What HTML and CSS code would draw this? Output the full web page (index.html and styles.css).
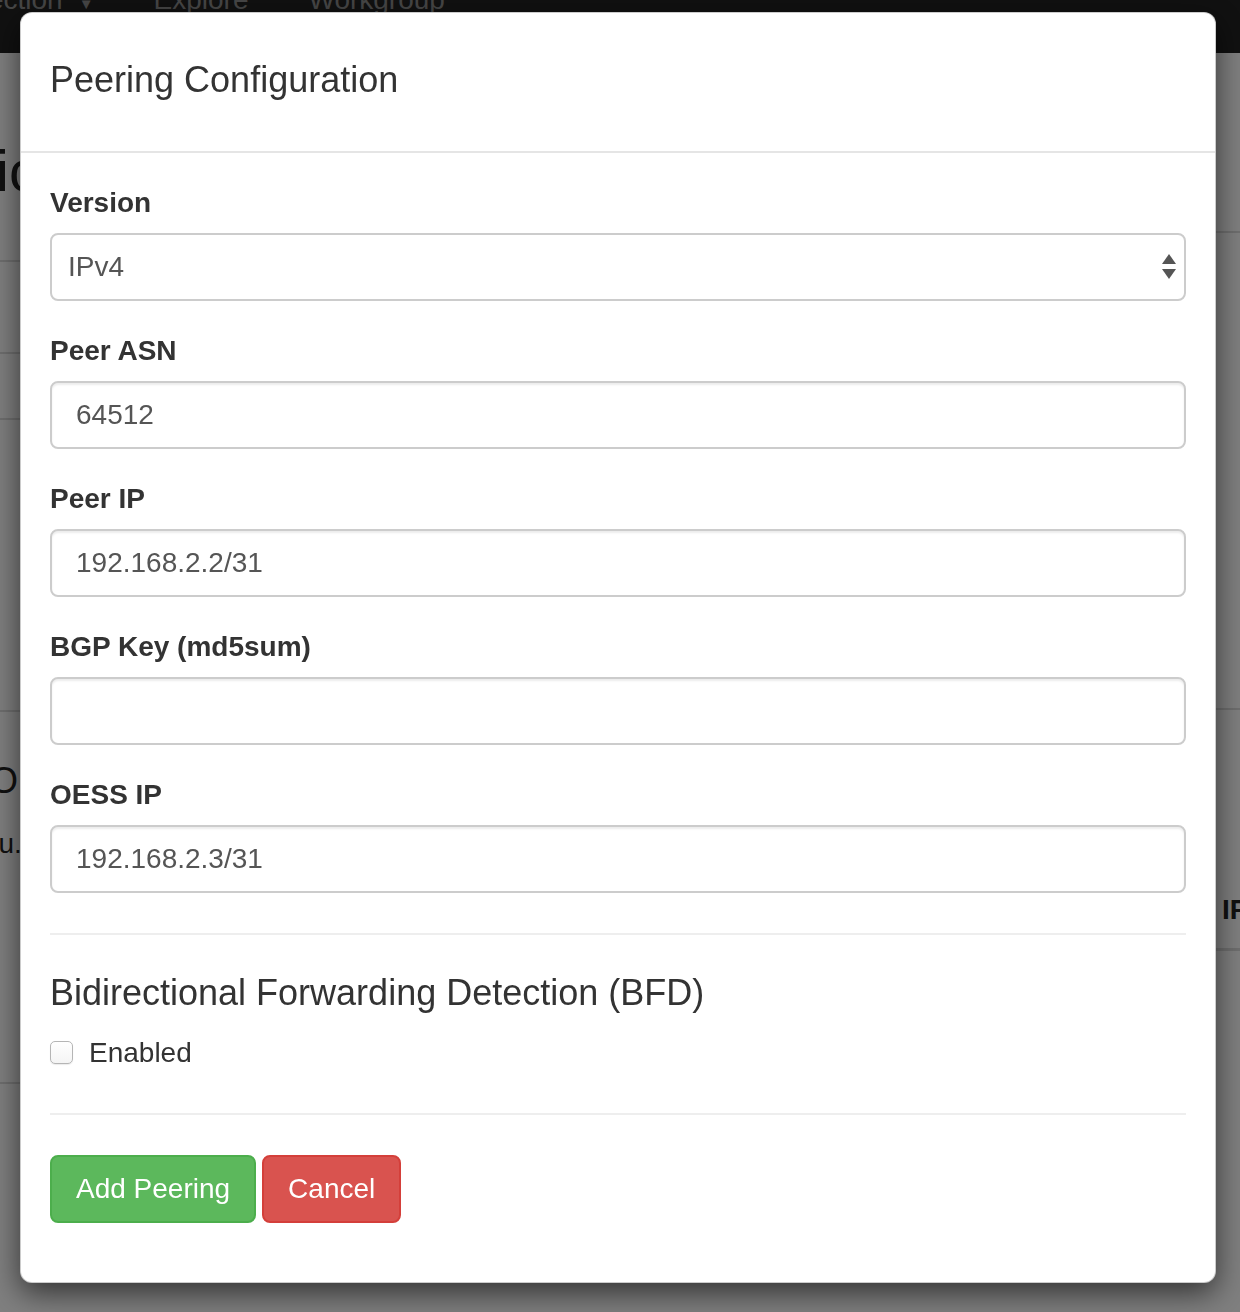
FILE: index.html
```html
<!DOCTYPE html>
<html lang="en">
<head>
<meta charset="utf-8">
<title>Peering Configuration</title>
<link rel="stylesheet" href="styles.css">
</head>
<body>
<div class="page">
  <nav class="navbar">
    <span class="nav-item nav-first">Connection</span><span class="caret">&#9660;</span>
    <span class="nav-item nav-explore">Explore</span>
    <span class="nav-item nav-workgroup">Workgroup</span>
  </nav>
  <div class="bg-grid">
    <div class="bg-left">
      <div class="bg-title"><span class="bg-h1">Public</span></div>
      <div class="bg-row bg-row1"></div>
      <div class="bg-row bg-row2"></div>
      <div class="bg-row bg-row3"></div>
      <div class="bg-block">
        <div class="bg-h3">O I</div>
        <div class="bg-p">menu.</div>
      </div>
    </div>
    <div class="bg-right">
      <div class="bg-rrow1"></div>
      <div class="bg-rrow2"></div>
      <div class="bg-rhead">IP</div>
    </div>
  </div>
</div>
<div class="backdrop"></div>
<div class="modal">
  <div class="modal-dialog">
    <div class="modal-content">
      <div class="modal-header">
        <h4 class="title">Peering Configuration</h4>
      </div>
      <div class="modal-body">
        <form class="form">
          <div class="form-group">
            <label class="control-label">Version</label>
            <div class="select-wrap">
              <select class="form-control select"><option>IPv4</option></select>
              <svg class="select-arrows" width="14" height="26" viewBox="0 0 14 26">
                <polygon points="7,0 14,10 0,10" fill="#555"/>
                <polygon points="0,15 14,15 7,25" fill="#555"/>
              </svg>
            </div>
          </div>
          <div class="form-group">
            <label class="control-label">Peer ASN</label>
            <input class="form-control" type="text" value="64512">
          </div>
          <div class="form-group">
            <label class="control-label">Peer IP</label>
            <input class="form-control" type="text" value="192.168.2.2/31">
          </div>
          <div class="form-group">
            <label class="control-label">BGP Key (md5sum)</label>
            <input class="form-control" type="text" value="">
          </div>
          <div class="form-group">
            <label class="control-label">OESS IP</label>
            <input class="form-control" type="text" value="192.168.2.3/31">
          </div>
          <hr class="divider divider-top">
          <h4 class="section-title">Bidirectional Forwarding Detection (BFD)</h4>
          <div class="checkbox">
            <label class="checkbox-label"><span class="cb"></span>Enabled</label>
          </div>
          <hr class="divider">
          <div class="actions">
            <button type="button" class="btn btn-success">Add Peering</button>
            <button type="button" class="btn btn-danger">Cancel</button>
          </div>
        </form>
      </div>
    </div>
  </div>
</div>
</body>
</html>
```
FILE: styles.css
```css
html, body {
  margin: 0;
  padding: 0;
  height: 1312px;
  overflow: hidden;
}
body {
  font-family: "Liberation Sans", Arial, Helvetica, sans-serif;
  background: #fff;
  color: #333;
}
.page {
  width: 1240px;
}
.navbar {
  height: 53px;
  background: #222;
  display: flex;
  align-items: flex-start;
  overflow: hidden;
}
.nav-item {
  font-size: 28px;
  line-height: 32px;
  color: #8d8d8d;
  margin-top: -16px;
  white-space: nowrap;
}
.nav-first {
  margin-left: -79px;
}
.caret {
  font-size: 15px;
  line-height: 15px;
  color: #8d8d8d;
  margin-left: 16px;
  margin-top: -4px;
}
.nav-explore {
  margin-left: 60px;
}
.nav-workgroup {
  margin-left: 60px;
}
.bg-grid {
  display: grid;
  grid-template-columns: 1216px 24px;
}
.bg-left {
  overflow: hidden;
}
.bg-title {
  height: 118px;
  padding-top: 89px;
  border-bottom: 2px solid #ddd;
}
.bg-h1 {
  display: block;
  font-size: 58px;
  line-height: 58px;
  margin-left: -120px;
  white-space: nowrap;
  color: #222;
}
.bg-row1 {
  height: 90px;
  border-bottom: 2px solid #ddd;
}
.bg-row2 {
  height: 64px;
  border-bottom: 2px solid #ddd;
}
.bg-row3 {
  height: 290px;
  border-bottom: 2px solid #ddd;
}
.bg-block {
  height: 321px;
  padding-top: 49px;
  border-bottom: 2px solid #ddd;
}
.bg-h3 {
  font-size: 36px;
  line-height: 40px;
  margin-left: -10px;
  white-space: nowrap;
  color: #222;
}
.bg-p {
  font-size: 28px;
  line-height: 40px;
  margin-top: 23px;
  margin-left: -56px;
  white-space: nowrap;
  color: #222;
}
.bg-right {
  overflow: hidden;
}
.bg-rrow1 {
  height: 178px;
  border-bottom: 2px solid #ddd;
}
.bg-rrow2 {
  height: 475px;
  border-bottom: 2px solid #ddd;
}
.bg-rhead {
  font-weight: bold;
  font-size: 28px;
  line-height: 40px;
  padding: 180px 0 18px 6px;
  border-bottom: 3px solid #ddd;
  color: #222;
  white-space: nowrap;
}
.backdrop {
  position: fixed;
  inset: 0;
  background: rgba(0, 0, 0, 0.5);
}
.modal {
  position: fixed;
  inset: 0;
}
.modal-dialog {
  width: 1196px;
  margin: 12px 0 0 20px;
}
.modal-content {
  background: #fff;
  border: 1px solid rgba(0, 0, 0, 0.2);
  border-radius: 12px;
  box-shadow: 0 10px 30px rgba(0, 0, 0, 0.6);
  box-sizing: border-box;
}
.modal-header {
  padding: 27px 29px 31px;
  border-bottom: 2px solid #e5e5e5;
}
.title {
  margin: 20px 0;
  font-size: 36px;
  line-height: 40px;
  font-weight: normal;
  color: #333;
}
.modal-body {
  padding: 30px 29px 29px;
}
.form {
  margin: 0;
}
.form-group {
  margin-bottom: 30px;
}
.control-label {
  display: block;
  font-size: 28px;
  line-height: 40px;
  font-weight: bold;
  margin-bottom: 10px;
  color: #333;
}
.form-control {
  display: block;
  width: 100%;
  height: 68px;
  box-sizing: border-box;
  padding: 12px 24px;
  font-family: "Liberation Sans", Arial, Helvetica, sans-serif;
  font-size: 28px;
  line-height: 40px;
  color: #555;
  background: #fff;
  border: 2px solid #ccc;
  border-radius: 8px;
  box-shadow: inset 0 2px 2px rgba(0, 0, 0, 0.075);
  outline: none;
  margin: 0;
}
.select-wrap {
  position: relative;
}
.select {
  -webkit-appearance: none;
  appearance: none;
  padding-left: 16px;
  box-shadow: none;
}
.select-arrows {
  position: absolute;
  right: 10px;
  top: 21px;
  pointer-events: none;
}
.divider {
  margin: 40px 0;
  border: 0;
  border-top: 2px solid #eee;
  height: 0;
}
.divider-top {
  margin-bottom: 38px;
}
.section-title {
  margin: 20px 0;
  font-size: 36px;
  line-height: 40px;
  font-weight: normal;
  color: #333;
}
.checkbox {
  margin: 20px 0;
}
.checkbox-label {
  display: flex;
  align-items: center;
  font-size: 28px;
  line-height: 40px;
  color: #333;
}
.cb {
  width: 21px;
  height: 21px;
  border: 1.5px solid #b5b5b5;
  border-radius: 5px;
  background: linear-gradient(#fff, #f4f4f4);
  margin-right: 16px;
  margin-top: -2px;
  box-shadow: 0 1px 1px rgba(0, 0, 0, 0.08);
}
.actions {
  display: flex;
  gap: 6px;
  margin-bottom: 30px;
}
.btn {
  font-family: "Liberation Sans", Arial, Helvetica, sans-serif;
  font-size: 28px;
  line-height: 40px;
  padding: 12px 24px;
  border: 2px solid transparent;
  border-radius: 8px;
  color: #fff;
  cursor: pointer;
  margin: 0;
}
.btn-success {
  background: #5cb85c;
  border-color: #4cae4c;
}
.btn-danger {
  background: #d9534f;
  border-color: #d43f3a;
}
```
